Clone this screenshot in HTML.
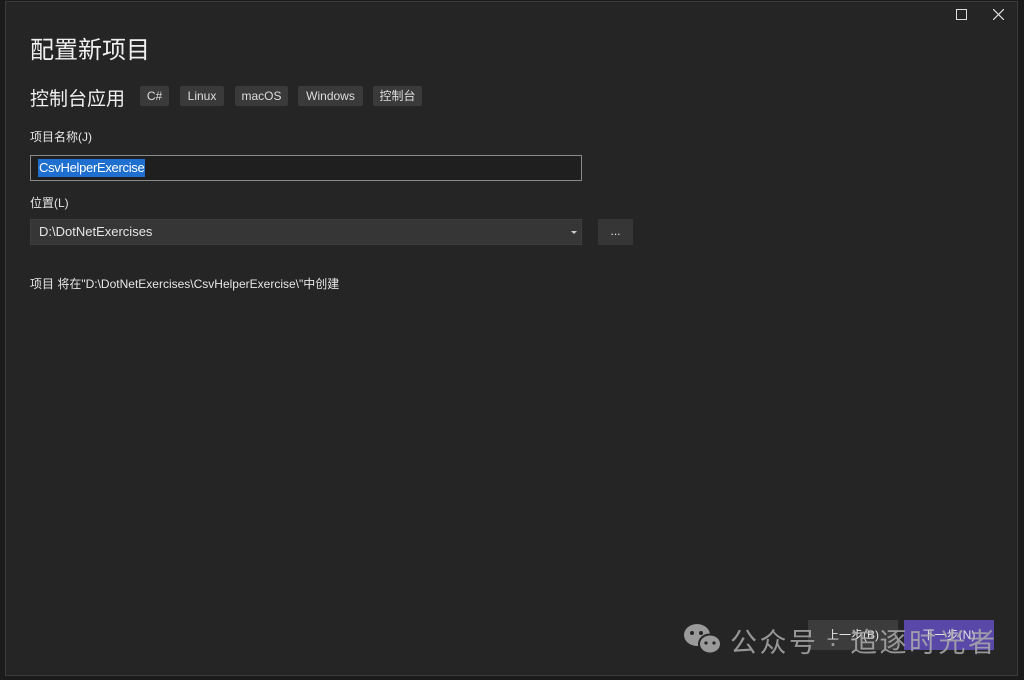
<!DOCTYPE html><html><head><meta charset="utf-8"><style>
body{margin:0;width:1024px;height:680px;background:#1b1b1c;position:relative;overflow:hidden;font-family:"Liberation Sans","Noto Sans CJK SC",sans-serif;color:#e6e6e6}
.win{position:absolute;left:5px;top:1px;width:1013px;height:675px;background:#252526;border:1px solid #3a3a3a;box-sizing:border-box}
.a{position:absolute;white-space:nowrap}
.tag{position:absolute;top:86px;height:20px;background:#3a3a3b;border-radius:2px;font-size:12px;line-height:20px;text-align:center;color:#ddd}
</style></head><body>
<div class="win"></div>
<div class="a" style="left:956px;top:9px;width:9px;height:9px;border:1px solid #ddd"></div>
<svg class="a" style="left:993px;top:9px" width="11" height="11"><path d="M0 0L11 11M11 0L0 11" stroke="#ddd" stroke-width="1.2"/></svg>
<div class="a" style="left:30px;top:30px;font-size:24px;color:#f0f0f0">配置新项目</div>
<div class="a" style="left:30px;top:84px;font-size:19px;color:#f0f0f0">控制台应用</div>
<div class="tag" style="left:140px;width:29px">C#</div>
<div class="tag" style="left:180px;width:44px">Linux</div>
<div class="tag" style="left:235px;width:53px">macOS</div>
<div class="tag" style="left:298px;width:65px">Windows</div>
<div class="tag" style="left:373px;width:49px">控制台</div>
<div class="a" style="left:30px;top:128px;font-size:12px">项目名称(J)</div>
<div class="a" style="left:30px;top:155px;width:552px;height:26px;border:1px solid #8a8a8a;box-sizing:border-box;background:#1f1f1f"></div>
<div class="a" style="left:38px;top:159px;height:18px;background:#1f6fd1;color:#fff;font-size:13px;line-height:18px;padding:0 1px;letter-spacing:-0.3px">CsvHelperExercise</div>
<div class="a" style="left:30px;top:194px;font-size:12px">位置(L)</div>
<div class="a" style="left:30px;top:219px;width:552px;height:26px;background:#363637;border:1px solid #3e3e3e;box-sizing:border-box;font-size:13px;line-height:24px;padding-left:8px">D:\DotNetExercises</div>
<div class="a" style="left:571px;top:231px;border:3px solid transparent;border-top:3px solid #ccc"></div>
<div class="a" style="left:598px;top:219px;width:35px;height:26px;background:#363637;text-align:center;font-size:12px;line-height:24px">...</div>
<div class="a" style="left:30px;top:275px;font-size:12px">项目 将在"D:\DotNetExercises\CsvHelperExercise\"中创建</div>
<div class="a" style="left:808px;top:620px;width:90px;height:30px;background:#3c3c3c;font-size:12px;line-height:30px;text-align:center">上一步(B)</div>
<div class="a" style="left:904px;top:620px;width:90px;height:30px;background:#5a48a8;font-size:12px;line-height:30px;text-align:center">下一步(N)</div>
<svg class="a" style="left:683px;top:622px" width="40" height="34"><ellipse cx="14" cy="13" rx="13" ry="11" fill="#9a9a9a"/><ellipse cx="27" cy="22" rx="11" ry="9.5" fill="#9a9a9a" stroke="#252526" stroke-width="2"/><circle cx="9" cy="11" r="2" fill="#252526"/><circle cx="18" cy="11" r="2" fill="#252526"/><circle cx="23" cy="21" r="1.6" fill="#252526"/><circle cx="31" cy="21" r="1.6" fill="#252526"/></svg>
<div class="a" style="left:730px;top:621px;font-size:27px;color:rgba(170,170,170,.85);letter-spacing:2.5px">公众号 · 追逐时光者</div>
</body></html>
